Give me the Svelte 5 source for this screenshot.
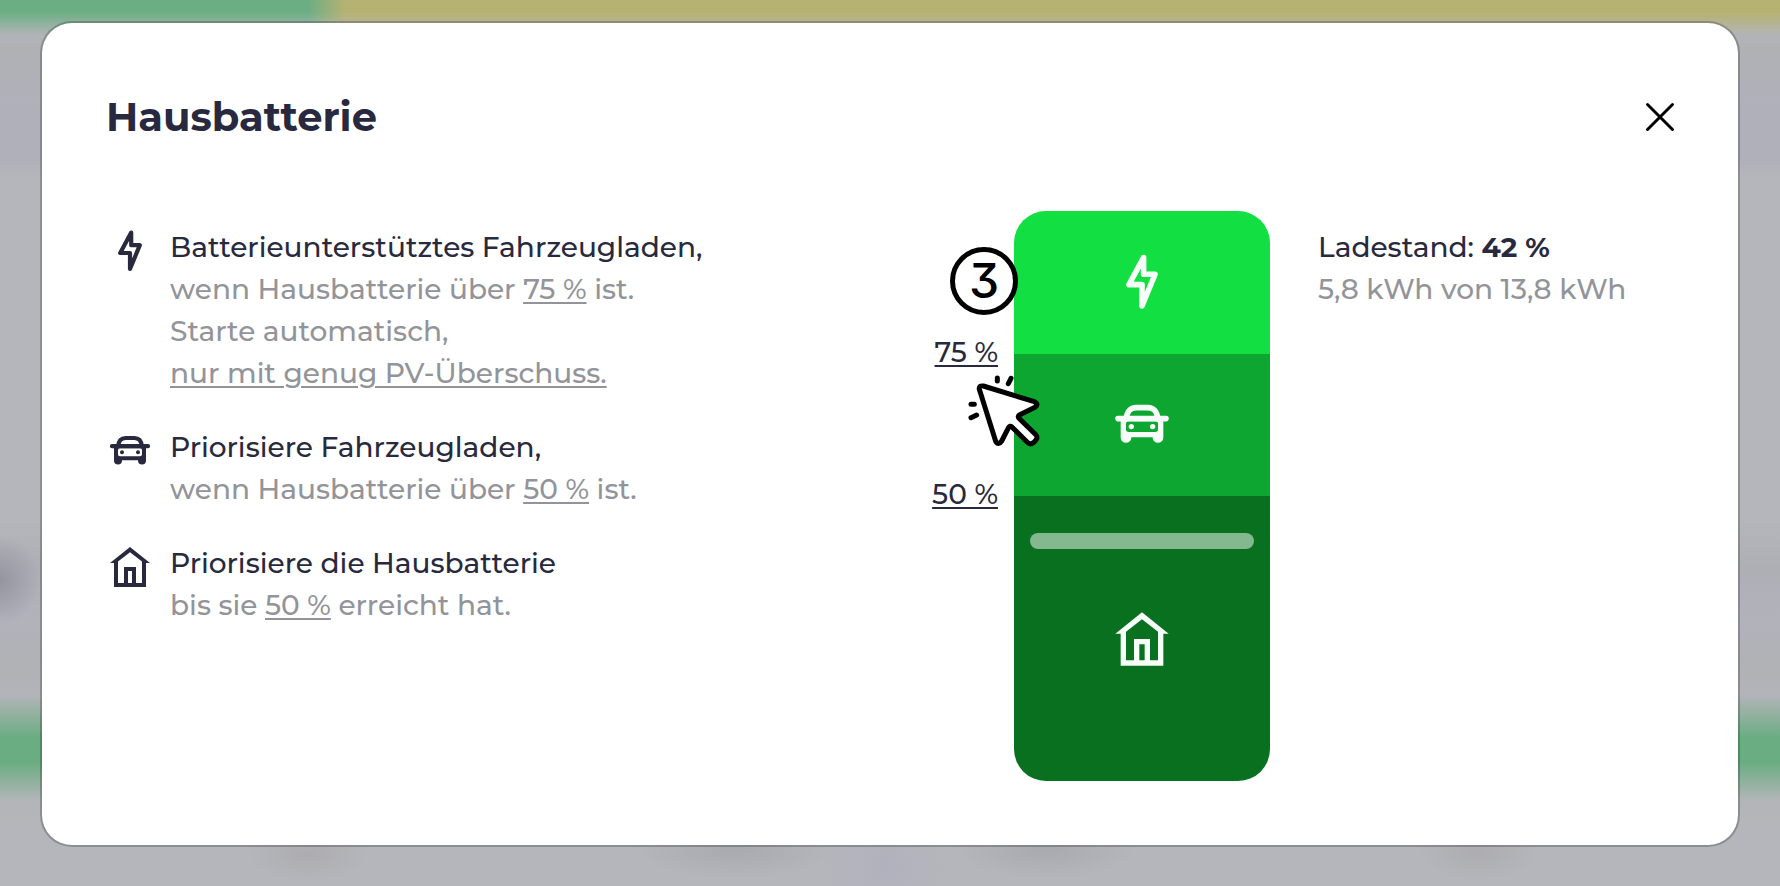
<script>
  const soc = 42;
  const segments = [
    { id: 'boost', icon: 'bolt', share: 25, threshold: 75 },
    { id: 'vehicle', icon: 'car', share: 25, threshold: 50 },
    { id: 'home', icon: 'house', share: 50, threshold: null }
  ];
</script>

{#snippet icon(name)}
  <svg class="icon" viewBox="0 0 24 24" aria-hidden="true">
    {#if name === 'bolt'}
      <path d="M12.6 2.8 7.1 13h4.9v8L16.9 9.1h-4.3z" fill="none" stroke="currentColor" stroke-width="2.1" stroke-linecap="round" stroke-linejoin="round" />
    {:else if name === 'car'}
      <path d="M6.1 9.6C6.3 7 7.6 5.5 9.8 5.5h4.4c2.2 0 3.5 1.5 3.7 4.1M3 9.6h18" fill="none" stroke="currentColor" stroke-width="2.1" stroke-linecap="round" />
      <path d="M4 9.6h16v7.1a2 2 0 0 1-4 0v-.1H8v.1a2 2 0 0 1-4 0zM7 10.6a1 1 0 0 0-1 1v2a1 1 0 0 0 1 1h10a1 1 0 0 0 1-1v-2a1 1 0 0 0-1-1z" fill="currentColor" fill-rule="evenodd" />
      <circle cx="8" cy="12.6" r="1" fill="currentColor" />
      <circle cx="16" cy="12.6" r="1" fill="currentColor" />
    {:else}
      <path d="M12 2 2 10h2v12h16V10h2zM6 9.3l6-4.7 6 4.7V20h-3v-8H9v8H6zM11 14h2v6h-2z" fill="currentColor" fill-rule="evenodd" />
    {/if}
  </svg>
{/snippet}

<div class="page">
  <div class="topstrip" aria-hidden="true"></div>
  <main class="modal" role="dialog" aria-labelledby="title">
    <header>
      <h1 id="title">Hausbatterie</h1>
      <button class="close" aria-label="Schließen">
        <svg viewBox="0 0 32 32" aria-hidden="true"><path d="M3.5 3.5l25 25M28.5 3.5l-25 25" /></svg>
      </button>
    </header>

    <div class="body">
      <ul class="legend">
        <li>
          {@render icon('bolt')}
          <div>
            <p>Batterieunterstütztes Fahrzeugladen,</p>
            <p class="muted">wenn Hausbatterie über <button class="value">75 %</button> ist.</p>
            <p class="muted">Starte automatisch,</p>
            <p class="muted"><button class="value">nur mit genug PV-Überschuss.</button></p>
          </div>
        </li>
        <li>
          {@render icon('car')}
          <div>
            <p>Priorisiere Fahrzeugladen,</p>
            <p class="muted">wenn Hausbatterie über <button class="value">50 %</button> ist.</p>
          </div>
        </li>
        <li>
          {@render icon('house')}
          <div>
            <p>Priorisiere die Hausbatterie</p>
            <p class="muted">bis sie <button class="value">50 %</button> erreicht hat.</p>
          </div>
        </li>
      </ul>

      <section class="status">
        <div class="scale">
          {#each segments as s (s.id)}
            <div class="tick" style="height: {s.share}%">
              {#if s.threshold}<button class="value">{s.threshold} %</button>{/if}
            </div>
          {/each}
        </div>

        <div class="battery">
          <div class="fill">
            {#each segments as s (s.id)}
              <div class="segment {s.id}" style="height: {s.share}%">{@render icon(s.icon)}</div>
            {/each}
          </div>
          <div class="level" style="bottom: {soc}%"></div>
          <span class="step">3</span>
          <svg class="cursor" viewBox="144 525 216 216" aria-hidden="true">
            <path class="arrow" d="M190 558 343 605Q358 612 345 622L298 645Q292 650 297 655L346 703Q356 713 346 722L340 728Q331 736 322 727L275 680Q270 676 266 682L245 723Q235 738 227 724L178 568Q176 556 190 558Z" />
            <path d="M232 534v9M273 535l-8 16M153 613h10M153 653l17-8" />
          </svg>
        </div>

        <div class="charge">
          <p>Ladestand: <strong>{soc} %</strong></p>
          <p class="muted">5,8 kWh von 13,8 kWh</p>
        </div>
      </section>
    </div>
  </main>
</div>

<style>
  :global(body) {
    margin: 0;
    background: #b5b6bb;
  }
  .page {
    position: relative;
    box-sizing: border-box;
    min-height: 100vh;
    padding: 21px 40px 39px;
    font-family: Montserrat, Inter, sans-serif;
    font-size: 28px;
    line-height: 42px;
    font-weight: 500;
    color: #28293e;
    background:
      radial-gradient(ellipse 40px 44px at 0 580px, #9495a0, transparent) no-repeat,
      radial-gradient(ellipse 60px 28px at 308px 854px, #acacb1, transparent) no-repeat,
      radial-gradient(ellipse 100px 28px at 735px 850px, #a9aaaf, transparent) no-repeat,
      radial-gradient(ellipse 60px 60px at 885px 866px, #b0b1bd, transparent) no-repeat,
      radial-gradient(ellipse 90px 28px at 1045px 850px, #a9aaaf, transparent) no-repeat,
      radial-gradient(ellipse 60px 28px at 1478px 852px, #acacb1, transparent) no-repeat,
      linear-gradient(#b5b6bb 24px, #b0b1b5 50px, #afb0b9 110px, #afb0b9 160px, #b5b6bb 175px, #b5b6bb 520px, #aeafb5 570px, #b2b2bb 620px, #b0b1b5 660px, #b3b4b9 695px, #6aad82 738px, #6aad82 762px, #b2b5b8 800px, #b5b6bb 830px);
  }
  .topstrip {
    position: absolute;
    inset: 0 0 auto;
    height: 36px;
    background: linear-gradient(to right, #6cae84 308px, #b5b272 345px);
    mask-image: linear-gradient(#000 12px, transparent);
  }
  .modal {
    position: relative;
    padding: 64px;
    border: 2px solid rgba(0, 0, 0, 0.22);
    border-radius: 32px;
    background: #fff padding-box;
  }
  header {
    display: flex;
    align-items: center;
    justify-content: space-between;
    height: 60px;
    margin-bottom: 64px;
  }
  h1 {
    margin: 0;
    font-size: 40px;
    line-height: 60px;
    font-weight: 700;
  }
  button {
    padding: 0;
    border: 0;
    background: none;
    color: inherit;
    font: inherit;
    cursor: pointer;
  }
  .value {
    text-decoration: underline;
    text-decoration-thickness: 2px;
    text-underline-offset: 3px;
  }
  .close {
    width: 32px;
    height: 32px;
    margin-right: -2px;
  }
  .close svg {
    display: block;
    fill: none;
    stroke: #000;
    stroke-width: 3;
    stroke-linecap: round;
  }
  .body {
    display: grid;
    grid-template-columns: 1fr 1fr;
  }
  p {
    margin: 0;
  }
  .muted {
    color: #93949a;
  }
  .legend {
    display: flex;
    flex-direction: column;
    gap: 32px;
    margin: 0;
    padding: 15px 0 0;
    list-style: none;
  }
  .legend li {
    display: flex;
    gap: 16px;
  }
  .icon {
    display: block;
    flex: none;
    width: 48px;
    height: 48px;
  }
  .legend .icon {
    margin-top: 1px;
  }
  .status {
    display: flex;
    height: 570px;
  }
  .scale {
    width: 108px;
    margin-right: 16px;
  }
  .tick {
    display: flex;
    align-items: flex-end;
    justify-content: flex-end;
  }
  .tick .value {
    margin-bottom: -19px;
  }
  .battery {
    position: relative;
    width: 256px;
    margin-right: 48px;
  }
  .fill {
    height: 100%;
    overflow: hidden;
    border-radius: 32px;
  }
  .segment {
    display: flex;
    align-items: center;
    justify-content: center;
    color: #f7fdf9;
  }
  .segment .icon {
    width: 64px;
    height: 64px;
  }
  .boost {
    background: #11df42;
  }
  .vehicle {
    background: #0da630;
  }
  .home {
    background: #08701f;
  }
  .level {
    position: absolute;
    left: 16px;
    right: 16px;
    height: 16px;
    margin-bottom: -7px;
    border-radius: 8px;
    background: rgba(255, 255, 255, 0.5);
  }
  .step {
    position: absolute;
    top: 36px;
    left: -64px;
    box-sizing: border-box;
    width: 68px;
    height: 68px;
    border: 5px solid #000;
    border-radius: 50%;
    background: #fff;
    color: #000;
    font-family: Inter, sans-serif;
    font-feature-settings: 'cv09';
    font-size: 48px;
    font-weight: 500;
    line-height: 58px;
    text-align: center;
  }
  .cursor {
    position: absolute;
    top: 164px;
    left: -46px;
    width: 72px;
    height: 72px;
    fill: none;
    stroke: #000;
    stroke-width: 15;
    stroke-linecap: round;
    stroke-linejoin: round;
  }
  .arrow {
    fill: #fff;
  }
  .charge {
    padding-top: 15px;
    white-space: nowrap;
  }
</style>
